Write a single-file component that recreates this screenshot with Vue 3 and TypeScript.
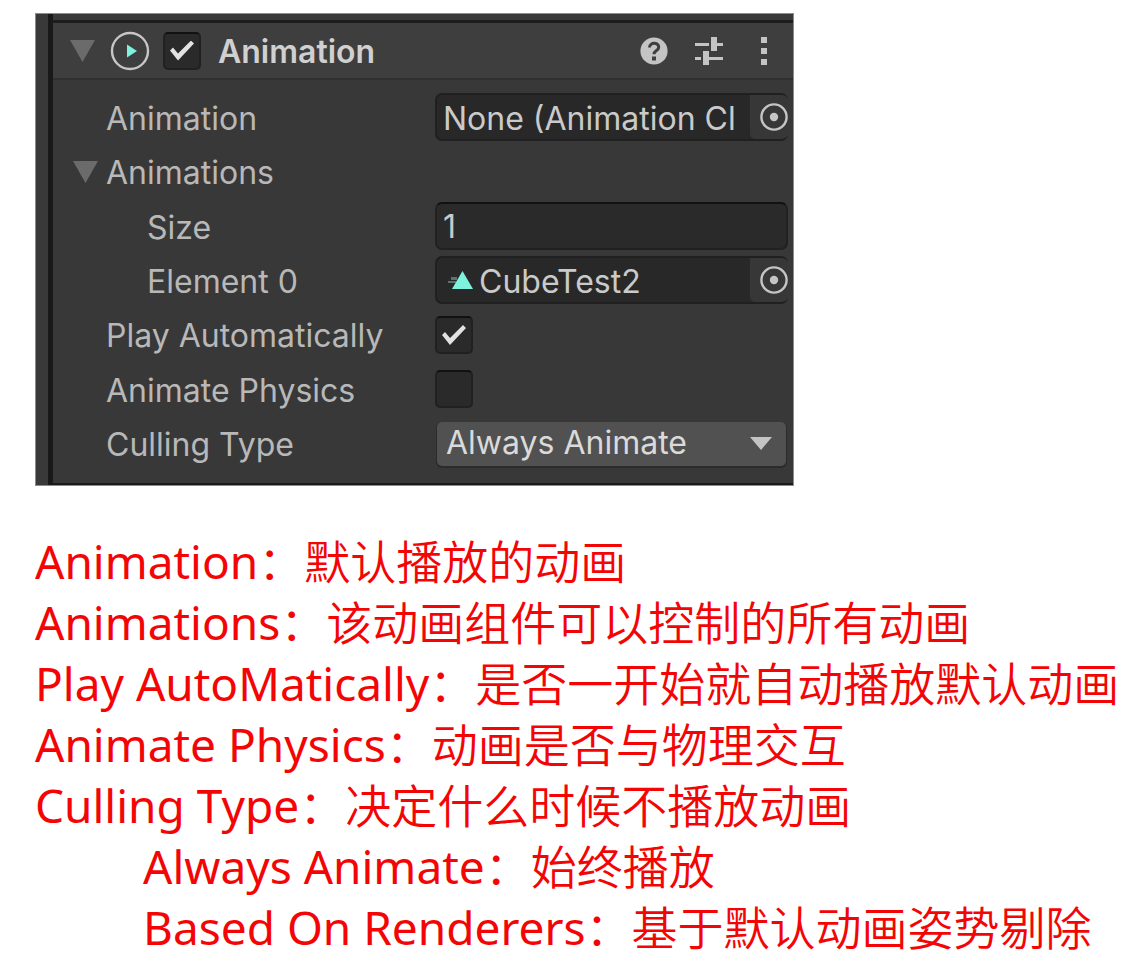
<script setup lang="ts">
import { ref } from 'vue'

interface Note {
  term: string
  text: string
  nested?: boolean
}

const enabled = ref(true)
const expanded = ref(true)
const clip = ref('None (Animation Cl')
const size = ref('1')
const element = ref('CubeTest2')
const playAutomatically = ref(true)
const animatePhysics = ref(false)
const culling = ref('Always Animate')

const notes: Note[] = [
  { term: 'Animation', text: '：默认播放的动画' },
  { term: 'Animations', text: '：该动画组件可以控制的所有动画' },
  { term: 'Play AutoMatically', text: '：是否一开始就自动播放默认动画' },
  { term: 'Animate Physics', text: '：动画是否与物理交互' },
  { term: 'Culling Type', text: '：决定什么时候不播放动画' },
  { term: 'Always Animate', text: '：始终播放', nested: true },
  { term: 'Based On Renderers', text: '：基于默认动画姿势剔除', nested: true },
]
</script>

<template>
  <main class="page">
    <section class="inspector" aria-label="Animation component">
      <div class="sheet">
        <header class="head">
          <button class="fold" type="button" aria-label="Toggle component">
            <svg width="25" height="22" viewBox="0 0 25 22"><path d="M0 0H25L12.5 22Z" fill="#6b6b6b" /></svg>
          </button>
          <svg class="kind" width="40" height="40" viewBox="0 0 40 40" aria-hidden="true">
            <circle cx="20" cy="20" r="18" fill="none" stroke="#c6c6c6" stroke-width="2.4" />
            <path d="M17 13.5L27 20L17 26.5Z" fill="#7ff2dd" />
          </svg>
          <input v-model="enabled" class="tick" type="checkbox" aria-label="Enabled" />
          <h1 class="title">Animation</h1>
          <div class="tools">
            <button type="button" aria-label="Help">
              <svg width="28" height="28" viewBox="0 0 28 28">
                <circle cx="14" cy="14" r="13.6" fill="#c4c4c4" />
                <path d="M9.5 10.5C9.8 4.8 18.7 4.9 18.7 10.2C18.7 13.6 14 13.3 14 17.2" fill="none" stroke="#3e3e3e" stroke-width="3" />
                <rect x="12" y="19.5" width="4" height="4" fill="#3e3e3e" />
              </svg>
            </button>
            <button type="button" aria-label="Presets">
              <svg width="28" height="28" viewBox="0 0 28 28" fill="#c4c4c4">
                <path d="M0 6H14V9H0ZM16 0H22V6H28V9H22V14H16ZM0 20H6V23H0ZM8 14H14V20H28V23H14V28H8Z" />
              </svg>
            </button>
            <button type="button" aria-label="More">
              <svg width="28" height="28" viewBox="0 0 28 28" fill="#c4c4c4">
                <path d="M11 0H17V6H11ZM11 11H17V17H11ZM11 22H17V28H11Z" />
              </svg>
            </button>
          </div>
        </header>

        <div class="props">
          <div class="row">
            <label for="clip">Animation</label>
            <div class="object">
              <input id="clip" v-model="clip" type="text" readonly />
              <button class="pick" type="button" aria-label="Select clip">
                <svg width="28" height="28" viewBox="0 0 28 28"><circle cx="14" cy="14" r="12.6" fill="none" stroke="#c4c4c4" stroke-width="2.4" /><circle cx="14" cy="14" r="4.2" fill="#c4c4c4" /></svg>
              </button>
            </div>
          </div>
          <div class="row">
            <button class="group" type="button" :aria-expanded="expanded" @click="expanded = !expanded">
              <svg width="25" height="22" viewBox="0 0 25 22"><path d="M0 0H25L12.5 22Z" fill="#6b6b6b" /></svg>
              <span>Animations</span>
            </button>
          </div>
          <div v-if="expanded" class="row nested">
            <label for="size">Size</label>
            <input id="size" v-model="size" class="number" type="text" />
          </div>
          <div v-if="expanded" class="row nested">
            <label for="element">Element 0</label>
            <div class="object">
              <svg class="clip-icon" width="25" height="20" viewBox="0 0 25 20" aria-hidden="true">
                <path d="M3 7H9V10H3ZM0 11H8V13H0Z" fill="#56756f" />
                <path d="M14.5 1L25 19H4Z" fill="#7ff2dd" />
              </svg>
              <input id="element" v-model="element" type="text" readonly />
              <button class="pick" type="button" aria-label="Select element">
                <svg width="28" height="28" viewBox="0 0 28 28"><circle cx="14" cy="14" r="12.6" fill="none" stroke="#c4c4c4" stroke-width="2.4" /><circle cx="14" cy="14" r="4.2" fill="#c4c4c4" /></svg>
              </button>
            </div>
          </div>
          <div class="row">
            <label for="play">Play Automatically</label>
            <input id="play" v-model="playAutomatically" class="tick" type="checkbox" />
          </div>
          <div class="row">
            <label for="physics">Animate Physics</label>
            <input id="physics" v-model="animatePhysics" class="tick" type="checkbox" />
          </div>
          <div class="row">
            <label for="culling">Culling Type</label>
            <div class="dropdown">
              <select id="culling" v-model="culling">
                <option>Always Animate</option>
                <option>Based On Renderers</option>
              </select>
              <svg width="22" height="13" viewBox="0 0 22 13" aria-hidden="true"><path d="M0 0H22L11 13Z" fill="#c4c4c4" /></svg>
            </div>
          </div>
        </div>
      </div>
    </section>

    <section class="notes" lang="zh-CN">
      <p v-for="note in notes" :key="note.term" :class="{ inner: note.nested }">
        {{ note.term }}<span>{{ note.text }}</span>
      </p>
    </section>
  </main>
</template>

<style>
body {
  margin: 0;
  background: #fff;
}
</style>

<style scoped>
* {
  box-sizing: border-box;
}
.page {
  padding: 13px 8px 8px 35px;
}
button {
  display: flex;
  padding: 0;
  border: 0;
  background: none;
  color: inherit;
  font: inherit;
}
svg {
  display: block;
  flex: none;
}
.inspector {
  max-width: 759px;
  padding-left: 13px;
  background: #393939;
  outline: 1px solid #8c8c8c;
  outline-offset: -1px;
  color: #b8b8b8;
  font-family: Inter, "Liberation Sans", sans-serif;
  font-size: 32px;
  line-height: 40px;
}
.sheet {
  padding-top: 7px;
  border-left: 5px solid #191919;
}
.head {
  display: flex;
  align-items: center;
  height: 60px;
  padding: 0 16px 0 17px;
  border-top: 3px solid #1d1d1d;
  border-bottom: 2px solid #303030;
  background: #3e3e3e;
}
.kind {
  margin: 0 13px 0 15px;
}
.title {
  margin: 0 0 0 17px;
  padding-top: 3px;
  color: #d0d0d0;
  font-size: 32px;
  font-weight: 600;
  line-height: 40px;
}
.tools {
  display: flex;
  gap: 27px;
  margin-left: auto;
}
.props {
  display: grid;
  grid-auto-rows: 1fr;
  min-height: 406px;
  padding: 10px 6px 12px 53px;
  border-bottom: 3px solid #1a1a1a;
  background: #383838;
}
.row {
  display: grid;
  grid-template-columns: 329px 1fr;
  align-items: center;
}
.row label,
.group span {
  padding-top: 3px;
}
.nested label {
  padding-left: 41px;
}
.group {
  align-items: center;
  gap: 8px;
  margin-left: -33px;
}
.tick {
  display: grid;
  place-items: center;
  width: 38px;
  height: 38px;
  margin: 0;
  border: 2px solid #212121;
  border-top-color: #111;
  border-radius: 5px;
  background: #2a2a2a;
  appearance: none;
}
.tick:checked::after {
  content: "";
  width: 24px;
  height: 20px;
  background: #e2e2e2;
  clip-path: polygon(0 10px, 3px 7px, 8px 13px, 21px 0, 24px 3px, 8px 20px);
}
.object {
  display: flex;
  height: 48px;
  overflow: hidden;
  border: 2px solid #202020;
  border-right: 0;
  border-radius: 7px;
  background: #282828;
}
.object input,
.number {
  min-width: 0;
  color: #cacaca;
  font: inherit;
  outline: none;
}
.object input {
  flex: 1;
  padding: 3px 0 0 6px;
  border: 0;
  background: transparent;
}
.clip-icon {
  align-self: center;
  margin-left: 11px;
}
.pick {
  align-items: center;
  justify-content: flex-end;
  width: 38px;
  border-radius: 0 0 0 5px;
  background: #373737;
}
.number {
  width: 100%;
  height: 48px;
  padding: 0 6px;
  border: 2px solid #212121;
  border-top-color: #111;
  border-radius: 7px;
  background: #2a2a2a;
}
.dropdown {
  display: grid;
  align-items: center;
  margin: 0 2px;
}
.dropdown select,
.dropdown svg {
  grid-area: 1 / 1;
}
.dropdown select {
  width: 100%;
  height: 44px;
  padding: 0 36px 2px 9px;
  border: 0;
  border-radius: 5px;
  background: #515151;
  box-shadow: 0 1px 0 1px #2b2b2b;
  color: #dadada;
  font: inherit;
  appearance: none;
}
.dropdown svg {
  justify-self: end;
  margin-right: 14px;
  pointer-events: none;
}
.notes {
  margin-top: 45px;
  color: #f40505;
  font-family: "Noto Sans", "Noto Sans CJK SC", sans-serif;
  font-size: 46px;
  line-height: 61px;
  white-space: nowrap;
}
.notes p {
  margin: 0;
}
.notes .inner {
  padding-left: 108px;
}
.notes span {
  font-family: "Noto Sans CJK SC", sans-serif;
  font-weight: 350;
  line-height: 1;
}
</style>
